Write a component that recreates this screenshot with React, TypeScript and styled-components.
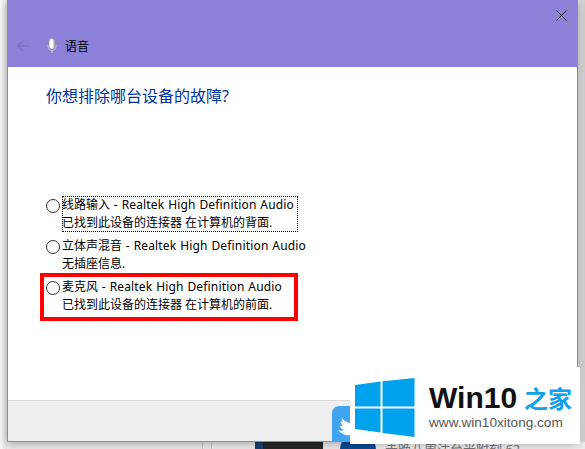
import React from 'react';
import styled, { createGlobalStyle } from 'styled-components';

const GlobalStyle = createGlobalStyle`
  html, body {
    margin: 0;
    padding: 0;
    background: #f1f1f1;
  }
`;

const Page = styled.div`
  position: relative;
  width: 585px;
  height: 449px;
  overflow: hidden;
  background: linear-gradient(90deg, #fafafa 0, #e4e4e4 7px, #e4e4e4 578px, #cfcfcf 585px);
  font-family: "Noto Sans", "Noto Sans CJK SC", sans-serif;
`;

const Desktop = styled.div`
  padding-left: 7px;
  display: flex;
  flex-direction: column;
`;

const Window = styled.div`
  width: 571px;
  height: 442px;
  box-sizing: border-box;
  display: flex;
  flex-direction: column;
  border: 1px solid #8a80d8;
  border-top: none;
  background: #fff;
  box-shadow: 0 2px 9px rgba(0, 0, 0, 0.32);
  z-index: 1;
`;

const Header = styled.header`
  height: 67px;
  flex: none;
  box-sizing: border-box;
  background: #8b81d8;
  display: flex;
  flex-direction: column;
`;

const TitleBar = styled.div`
  height: 30px;
  display: flex;
  justify-content: flex-end;
  align-items: center;
  padding-right: 10px;
`;

const CloseButton = styled.button`
  border: none;
  background: none;
  padding: 0;
  width: 11px;
  height: 11px;
  display: flex;
`;

const NavRow = styled.div`
  height: 32px;
  display: flex;
  align-items: center;
  padding-left: 8px;
`;

const BackButton = styled.button`
  border: none;
  background: none;
  padding: 0;
  width: 13px;
  height: 12px;
  display: flex;
  margin-right: 18px;
`;

const NavTitle = styled.span`
  margin-left: 8px;
  font-size: 12px;
  color: #000;
`;

const Body = styled.main`
  flex: 1;
  padding: 18px 0 0 38px;
  display: flex;
  flex-direction: column;
`;

const Heading = styled.h1`
  margin: 0;
  font-size: 16px;
  line-height: 22px;
  font-weight: 400;
  color: #003399;
`;

const Options = styled.div`
  display: flex;
  flex-direction: column;
  gap: 5px;
  margin-top: 89px;
`;

const Option = styled.label`
  display: flex;
  align-items: flex-start;
  gap: 2px;
  color: #000;
  font-size: 12px;
  line-height: 17.5px;
`;

const RadioMark = styled.span`
  width: 12px;
  height: 12px;
  flex: none;
  margin-top: 3px;
  border: 1px solid #333;
  border-radius: 50%;
  background: #fff;
`;

const OptionText = styled.span<{ $focused?: boolean }>`
  display: block;
  box-sizing: border-box;
  height: 36px;
  outline: ${(p) => (p.$focused ? '1px dotted #000' : 'none')};
  outline-offset: -1px;
  width: ${(p) => (p.$focused ? '236px' : 'auto')};
`;

const TextLine = styled.span`
  display: block;
  white-space: nowrap;
`;

const DeviceName = styled.span`
  letter-spacing: 0.17px;
  word-spacing: 0.5px;
`;

const Footer = styled.footer`
  height: 40px;
  flex: none;
  background: #efefef;
  border-top: 1px solid #d9d9d9;
`;

const Strip = styled.div`
  height: 7px;
  display: flex;
  background: #eeeeee;
`;

const StripLine = styled.span<{ $left: number }>`
  width: 1px;
  margin-left: ${(p) => p.$left}px;
  background: #c8c8c8;
`;

const DarkTile = styled.span`
  width: 68px;
  margin-left: 43px;
  background: linear-gradient(90deg, #1a3f6e 0, #1a3f6e 8px, #24272b 8px);
`;

const NewsText = styled.span`
  margin-left: 62px;
  font-size: 13px;
  line-height: 13px;
  color: #777;
  white-space: nowrap;
  padding-top: 1px;
`;

const Highlight = styled.div`
  position: absolute;
  left: 40px;
  top: 273px;
  width: 258px;
  height: 48px;
  box-sizing: border-box;
  border: 4px solid #ff0000;
  z-index: 2;
`;

const TwitterTile = styled.div`
  position: absolute;
  left: 332px;
  top: 406px;
  width: 22px;
  height: 36px;
  background: #3fa5f2;
  border-radius: 7px 0 0 0;
  z-index: 2;
`;

const AvatarCircle = styled.div`
  position: absolute;
  left: 340px;
  top: 432px;
  width: 36px;
  height: 36px;
  border-radius: 50%;
  background: #0a4a96;
`;

const Watermark = styled.div`
  position: absolute;
  left: 350px;
  top: 367px;
  width: 230px;
  height: 77px;
  box-sizing: border-box;
  padding: 11px 0 0 5px;
  background: #fff;
  display: flex;
  gap: 14px;
  z-index: 3;
  font-family: "Liberation Sans", "Noto Sans CJK SC", sans-serif;
`;

const LogoColumn = styled.div`
  display: flex;
  flex-direction: column;
  margin-top: 2px;
`;

const BrandRow = styled.div`
  display: flex;
  align-items: center;
  gap: 7px;
  height: 36px;
  white-space: nowrap;
`;

const BrandName = styled.span`
  font-size: 30px;
  font-weight: 700;
  color: #111;
`;

const BrandCn = styled.span`
  font-size: 24px;
  line-height: 30px;
  font-weight: 700;
  color: #0ea0e8;
  font-family: "Noto Sans CJK SC", sans-serif;
`;

const BrandUrl = styled.span`
  font-size: 13.6px;
  line-height: 16px;
  margin-top: -1px;
  color: #555;
  white-space: nowrap;
`;

const MicIcon = () => (
  <svg width="10" height="16" viewBox="0 0 10 16">
    <defs>
      <linearGradient id="micBody" x1="0" x2="1" y1="0" y2="0">
        <stop offset="0" stopColor="#f4f4f4" />
        <stop offset="0.55" stopColor="#ffffff" />
        <stop offset="1" stopColor="#9a9aa0" />
      </linearGradient>
    </defs>
    <rect x="2" y="0.5" width="6" height="10.5" rx="3" fill="url(#micBody)" stroke="#9b98a8" strokeWidth="0.6" />
    <path d="M1 7v1.5a4 4 0 0 0 8 0V7" fill="none" stroke="#bcbcc4" strokeWidth="1" />
    <path d="M5 12.5V15" stroke="#c9c9d0" strokeWidth="1.4" />
  </svg>
);

const WinLogo = () => (
  <svg width="60" height="60" viewBox="0 0 60 60">
    <path d="M0 7 L25.5 3.5 V28.5 H0Z M27.5 3.2 L59.5 0 V28.5 H27.5Z M0 30.5 H25.5 V54.5 L0 51Z M27.5 30.5 H59.5 V59 L27.5 55Z" fill="#00a2ed" />
  </svg>
);

const BirdIcon = () => (
  <svg width="18" height="36" viewBox="0 0 18 36" style={{ display: 'block' }}>
    <path d="M10 12C12 15 15 16 18 17V29C14 30 9 28 6 24C8 25 10 25 12 24C9 23 8 21 8 20C9 20 10 20 11 20C9 18 8 16 9 15C10 16 10 16 11 16C10 15 9.5 13.5 10 12Z" fill="#fff" />
  </svg>
);

const App: React.FC = () => {
  return (
    <Page>
      <GlobalStyle />
      <Desktop>
        <Window>
          <Header>
            <TitleBar>
              <CloseButton aria-label="close">
                <svg width="11" height="11" viewBox="0 0 11 11">
                  <path d="M0.5 0.5 10.5 10.5M10.5 0.5 0.5 10.5" stroke="#111" strokeWidth="1" />
                </svg>
              </CloseButton>
            </TitleBar>
            <NavRow>
              <BackButton aria-label="back">
                <svg width="13" height="12" viewBox="0 0 13 12">
                  <path d="M12.5 6H1.5M6.5 1 1.5 6l5 5" fill="none" stroke="#7b72bf" strokeWidth="1.3" />
                </svg>
              </BackButton>
              <MicIcon />
              <NavTitle>语音</NavTitle>
            </NavRow>
          </Header>
          <Body>
            <Heading>你想排除哪台设备的故障?</Heading>
            <Options>
              <Option>
                <RadioMark />
                <OptionText $focused>
                  <TextLine>线路输入<DeviceName> - Realtek High Definition Audio</DeviceName></TextLine>
                  <TextLine>已找到此设备的连接器 在计算机的背面.</TextLine>
                </OptionText>
              </Option>
              <Option>
                <RadioMark />
                <OptionText>
                  <TextLine>立体声混音<DeviceName> - Realtek High Definition Audio</DeviceName></TextLine>
                  <TextLine>无插座信息.</TextLine>
                </OptionText>
              </Option>
              <Option>
                <RadioMark />
                <OptionText>
                  <TextLine>麦克风<DeviceName> - Realtek High Definition Audio</DeviceName></TextLine>
                  <TextLine>已找到此设备的连接器 在计算机的前面.</TextLine>
                </OptionText>
              </Option>
            </Options>
          </Body>
          <Footer />
        </Window>
        <Strip>
          <StripLine $left={195} />
          <StripLine $left={8} />
          <DarkTile />
          <NewsText>赤晚八周注台光附刻 62</NewsText>
        </Strip>
      </Desktop>
      <Highlight />
      <AvatarCircle />
      <TwitterTile>
        <BirdIcon />
      </TwitterTile>
      <Watermark>
        <WinLogo />
        <LogoColumn>
          <BrandRow>
            <BrandName>Win10</BrandName>
            <BrandCn>之家</BrandCn>
          </BrandRow>
          <BrandUrl>www.win10xitong.com</BrandUrl>
        </LogoColumn>
      </Watermark>
    </Page>
  );
};

export default App;
